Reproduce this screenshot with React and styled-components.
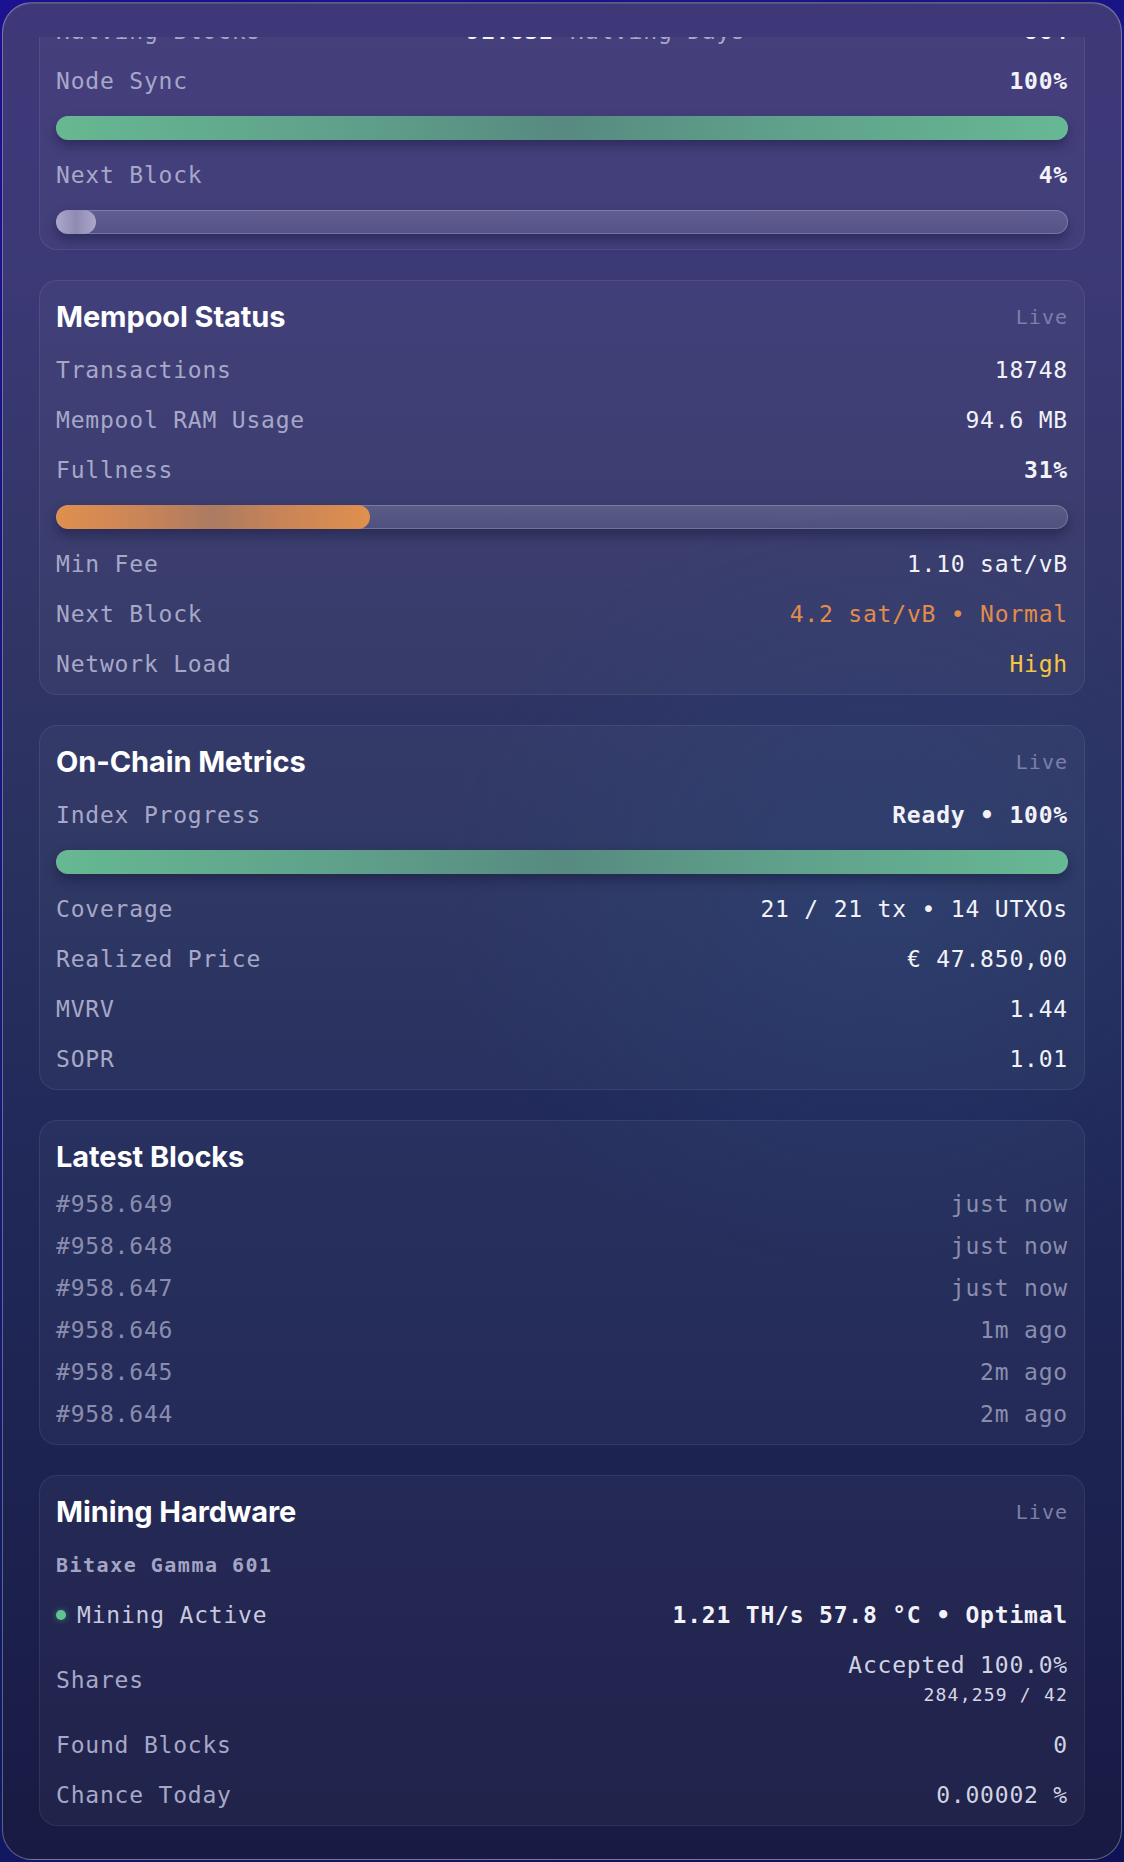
import React, { useLayoutEffect, useRef } from 'react';
import styled, { createGlobalStyle } from 'styled-components';

const GlobalStyle = createGlobalStyle`
  html, body {
    margin: 0;
    padding: 0;
  }
  body {
    width: 1124px;
    height: 1862px;
    overflow: hidden;
    background: linear-gradient(160deg, #1c1190 0%, #161a78 45%, #111a66 75%, #0d1356 100%);
  }
`;

const mono = `'DejaVu Sans Mono', 'Liberation Mono', monospace`;

const fills = {
  green: 'linear-gradient(90deg, #66b892 0%, #5f9f8a 30%, #578a80 50%, #5f9f8a 70%, #67b894 100%)',
  orange: 'linear-gradient(90deg, #e0904e 0%, #c78358 30%, #ab7b62 50%, #c78358 70%, #e0904e 100%)',
  gray: 'linear-gradient(90deg, #aca7ca 0%, #8f8ab3 50%, #aca7ca 100%)'
};

const tones = {
  orange: '#e08c4c',
  yellow: '#f5c63f',
  muted: '#8b8dae',
  soft: '#d2d3e2'
};

const blocks = [
  ['#958.649', 'just now'],
  ['#958.648', 'just now'],
  ['#958.647', 'just now'],
  ['#958.646', '1m ago'],
  ['#958.645', '2m ago'],
  ['#958.644', '2m ago']
];

const ProgressBar = ({ value, tone }) => (
  <Track>
    <Fill $tone={tone} style={{ width: `${value}%` }} />
  </Track>
);

const App = () => {
  const scrollRef = useRef(null);

  // dashboard is shown scrolled down to the mining card
  useLayoutEffect(() => {
    const el = scrollRef.current;
    if (el) el.scrollTop = el.scrollHeight;
  }, []);

  return (
    <>
      <GlobalStyle />
      <Panel>
        <Scroller ref={scrollRef}>
          <Card>
            <CardHead>
              <Title>Blockchain</Title>
              <Badge>Live</Badge>
            </CardHead>
            <Row>
              <Label>Block Height</Label>
              <Value>958.649</Value>
            </Row>
            <Row>
              <Label>Difficulty</Label>
              <Value>126.27 T</Value>
            </Row>
            <SplitRow>
              <Row>
                <Label>Halving Blocks</Label>
                <Value $bold>91.832</Value>
              </Row>
              <Row>
                <Label>Halving Days</Label>
                <Value $bold>864</Value>
              </Row>
            </SplitRow>
            <Row>
              <Label>Node Sync</Label>
              <Value $bold>100%</Value>
            </Row>
            <ProgressBar value={100} tone="green" />
            <Row>
              <Label>Next Block</Label>
              <Value $bold>4%</Value>
            </Row>
            <ProgressBar value={4} tone="gray" />
          </Card>

          <Card>
            <CardHead>
              <Title>Mempool Status</Title>
              <Badge>Live</Badge>
            </CardHead>
            <Row>
              <Label>Transactions</Label>
              <Value>18748</Value>
            </Row>
            <Row>
              <Label>Mempool RAM Usage</Label>
              <Value>94.6 MB</Value>
            </Row>
            <Row>
              <Label>Fullness</Label>
              <Value $bold>31%</Value>
            </Row>
            <ProgressBar value={31} tone="orange" />
            <Row>
              <Label>Min Fee</Label>
              <Value>1.10 sat/vB</Value>
            </Row>
            <Row>
              <Label>Next Block</Label>
              <Value $tone="orange">4.2 sat/vB • Normal</Value>
            </Row>
            <Row>
              <Label>Network Load</Label>
              <Value $tone="yellow">High</Value>
            </Row>
          </Card>

          <Card>
            <CardHead>
              <Title>On-Chain Metrics</Title>
              <Badge>Live</Badge>
            </CardHead>
            <Row>
              <Label>Index Progress</Label>
              <Value $bold>Ready • 100%</Value>
            </Row>
            <ProgressBar value={100} tone="green" />
            <Row>
              <Label>Coverage</Label>
              <Value>21 / 21 tx • 14 UTXOs</Value>
            </Row>
            <Row>
              <Label>Realized Price</Label>
              <Value>€ 47.850,00</Value>
            </Row>
            <Row>
              <Label>MVRV</Label>
              <Value>1.44</Value>
            </Row>
            <Row>
              <Label>SOPR</Label>
              <Value>1.01</Value>
            </Row>
          </Card>

          <Card $gap={14}>
            <CardHead>
              <Title>Latest Blocks</Title>
            </CardHead>
            <BlockList>
              {blocks.map(([height, age]) => (
                <Row key={height}>
                  <Label $tone="muted">{height}</Label>
                  <Value $tone="muted">{age}</Value>
                </Row>
              ))}
            </BlockList>
          </Card>

          <Card>
            <CardHead>
              <Title>Mining Hardware</Title>
              <Badge>Live</Badge>
            </CardHead>
            <DeviceName>Bitaxe Gamma 601</DeviceName>
            <Row>
              <Label $bright>
                <StatusDot />
                Mining Active
              </Label>
              <Value $bold>1.21 TH/s 57.8 °C • Optimal</Value>
            </Row>
            <Row>
              <Label>Shares</Label>
              <Stack>
                <Value $tone="soft">Accepted 100.0%</Value>
                <SubValue>284,259 / 42</SubValue>
              </Stack>
            </Row>
            <Row>
              <Label>Found Blocks</Label>
              <Value $tone="soft">0</Value>
            </Row>
            <Row>
              <Label>Chance Today</Label>
              <Value $tone="soft">0.00002 %</Value>
            </Row>
          </Card>
        </Scroller>
      </Panel>
    </>
  );
};

export default App;

const Panel = styled.div`
  box-sizing: border-box;
  margin: 2px;
  height: 1858px;
  display: flex;
  flex-direction: column;
  padding: 34px 36px 33px;
  border-radius: 30px;
  border: 1px solid rgba(255, 255, 255, 0.3);
  box-shadow: inset 0 1px 0 rgba(255, 255, 255, 0.12);
  background:
    radial-gradient(ellipse 55% 30% at 78% 48%, rgba(36, 70, 124, 0.35), transparent 70%),
    linear-gradient(
      180deg,
      #3f3878 0%,
      #3c3977 14%,
      #333668 30%,
      #29315f 46%,
      #212a5a 60%,
      #1e2553 74%,
      #1b1f4b 88%,
      #181a43 100%
    );
  font-family: ${mono};
`;

const Scroller = styled.div`
  flex: 1;
  min-height: 0;
  display: flex;
  flex-direction: column;
  gap: 30px;
  overflow-y: auto;
  scrollbar-width: none;

  &::-webkit-scrollbar {
    display: none;
  }
`;

const Card = styled.section`
  flex-shrink: 0;
  display: flex;
  flex-direction: column;
  gap: ${p => p.$gap || 20}px;
  padding: 18px 16px 15px;
  border-radius: 18px;
  border: 1px solid rgba(255, 255, 255, 0.07);
  background: rgba(255, 255, 255, 0.035);
`;

const CardHead = styled.div`
  display: flex;
  align-items: center;
  justify-content: space-between;
  height: 36px;
`;

const Title = styled.h2`
  margin: 0;
  font-family: Inter, 'Noto Sans', sans-serif;
  font-weight: 700;
  font-size: 29px;
  letter-spacing: -0.1px;
  line-height: 36px;
  color: #ffffff;
`;

const Badge = styled.span`
  font-size: 20px;
  letter-spacing: 1px;
  color: #7d80a9;
`;

const Row = styled.div`
  display: flex;
  align-items: center;
  justify-content: space-between;
  min-height: 30px;
  font-size: 23px;
  letter-spacing: 0.8px;
  line-height: 30px;
  white-space: nowrap;
`;

const SplitRow = styled.div`
  display: grid;
  grid-template-columns: 1fr 1fr;
  column-gap: 16px;
`;

const Label = styled.span`
  display: flex;
  align-items: center;
  gap: 11px;
  color: ${p => (p.$tone ? tones[p.$tone] : p.$bright ? '#c9c9de' : '#a7a8c8')};
`;

const Value = styled.span`
  color: ${p => (p.$tone ? tones[p.$tone] : '#f2f2f8')};
  font-weight: ${p => (p.$bold ? 700 : 400)};
`;

const Stack = styled.div`
  display: flex;
  flex-direction: column;
  align-items: flex-end;
`;

const SubValue = styled.span`
  font-size: 18px;
  letter-spacing: 1.2px;
  color: #d6d6e4;
`;

const DeviceName = styled.div`
  font-size: 20px;
  font-weight: 700;
  letter-spacing: 1.5px;
  line-height: 30px;
  color: #a4a5c4;
`;

const StatusDot = styled.span`
  flex-shrink: 0;
  width: 10px;
  height: 10px;
  border-radius: 50%;
  background: #5fc290;
  box-shadow: 0 0 6px rgba(95, 194, 144, 0.5);
`;

const BlockList = styled.div`
  display: flex;
  flex-direction: column;
  gap: 12px;
`;

const Track = styled.div`
  position: relative;
  height: 24px;
  border-radius: 12px;
  overflow: hidden;
  background: linear-gradient(180deg, rgba(255, 255, 255, 0.16), rgba(255, 255, 255, 0.1));
  box-shadow:
    inset 0 0 0 1px rgba(255, 255, 255, 0.2),
    0 6px 12px rgba(8, 8, 36, 0.35);
`;

const Fill = styled.div`
  height: 100%;
  min-width: 24px;
  border-radius: 12px;
  background: ${p => fills[p.$tone]};
`;
